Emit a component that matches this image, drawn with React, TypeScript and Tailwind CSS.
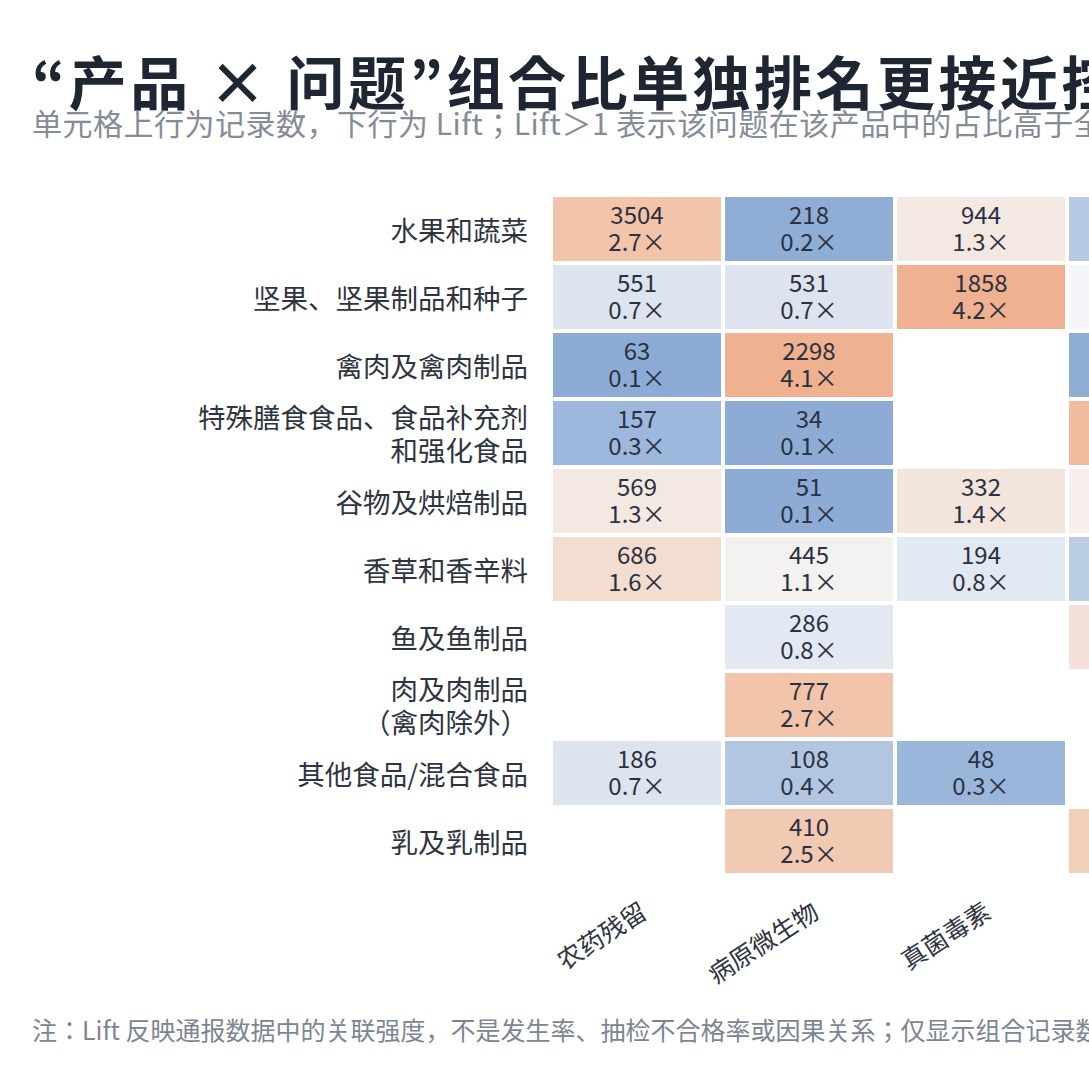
import React from "react";

type Cell = { n: number; lift: number; bg: string } | null;

interface Row {
  label: string[];
  cells: Cell[];
}

const columns = ["农药残留", "病原微生物", "真菌毒素", "重金属"];

const rows: Row[] = [
  {
    label: ["水果和蔬菜"],
    cells: [
      { n: 3504, lift: 2.7, bg: "bg-[#f2c4a9]" },
      { n: 218, lift: 0.2, bg: "bg-[#8fadd5]" },
      { n: 944, lift: 1.3, bg: "bg-[#f4e8e3]" },
      { n: 402, lift: 0.4, bg: "bg-[#b6c8e2]" },
    ],
  },
  {
    label: ["坚果、坚果制品和种子"],
    cells: [
      { n: 551, lift: 0.7, bg: "bg-[#dde4f0]" },
      { n: 531, lift: 0.7, bg: "bg-[#dde4f0]" },
      { n: 1858, lift: 4.2, bg: "bg-[#efb18f]" },
      { n: 356, lift: 0.9, bg: "bg-[#f3f5f9]" },
    ],
  },
  {
    label: ["禽肉及禽肉制品"],
    cells: [
      { n: 63, lift: 0.1, bg: "bg-[#8dabd4]" },
      { n: 2298, lift: 4.1, bg: "bg-[#efb18f]" },
      null,
      { n: 41, lift: 0.1, bg: "bg-[#8fadd5]" },
    ],
  },
  {
    label: ["特殊膳食食品、食品补充剂", "和强化食品"],
    cells: [
      { n: 157, lift: 0.3, bg: "bg-[#9db8dc]" },
      { n: 34, lift: 0.1, bg: "bg-[#8dabd4]" },
      null,
      { n: 512, lift: 3.1, bg: "bg-[#efbc9f]" },
    ],
  },
  {
    label: ["谷物及烘焙制品"],
    cells: [
      { n: 569, lift: 1.3, bg: "bg-[#f4e8e3]" },
      { n: 51, lift: 0.1, bg: "bg-[#8dabd4]" },
      { n: 332, lift: 1.4, bg: "bg-[#f3e4dc]" },
      { n: 238, lift: 1.2, bg: "bg-[#f6efed]" },
    ],
  },
  {
    label: ["香草和香辛料"],
    cells: [
      { n: 686, lift: 1.6, bg: "bg-[#f3ddd0]" },
      { n: 445, lift: 1.1, bg: "bg-[#f3f2f0]" },
      { n: 194, lift: 0.8, bg: "bg-[#e2e9f3]" },
      { n: 131, lift: 0.5, bg: "bg-[#bccde6]" },
    ],
  },
  {
    label: ["鱼及鱼制品"],
    cells: [
      null,
      { n: 286, lift: 0.8, bg: "bg-[#e2e9f3]" },
      null,
      { n: 167, lift: 1.5, bg: "bg-[#f4e2da]" },
    ],
  },
  {
    label: ["肉及肉制品", "（禽肉除外）"],
    cells: [null, { n: 777, lift: 2.7, bg: "bg-[#f2c4a9]" }, null, null],
  },
  {
    label: ["其他食品/混合食品"],
    cells: [
      { n: 186, lift: 0.7, bg: "bg-[#dde4f0]" },
      { n: 108, lift: 0.4, bg: "bg-[#b2c6e2]" },
      { n: 48, lift: 0.3, bg: "bg-[#9bb6db]" },
      null,
    ],
  },
  {
    label: ["乳及乳制品"],
    cells: [
      null,
      { n: 410, lift: 2.5, bg: "bg-[#f2cab4]" },
      null,
      { n: 92, lift: 2.3, bg: "bg-[#f2cfbb]" },
    ],
  },
];

const jp = { fontFamily: '"Noto Sans CJK JP", "Noto Sans CJK SC", sans-serif' };

function HeatCell({ cell }: { cell: Cell }) {
  if (!cell) return <div className="w-[168px] h-[64px] shrink-0" />;
  return (
    <div
      className={`w-[168px] h-[64px] shrink-0 flex flex-col items-center justify-center pb-[5px] text-[24px] leading-[27px] text-[#2b3140] ${cell.bg}`}
    >
      <span>{cell.n}</span>
      <span>{cell.lift.toFixed(1)}×</span>
    </div>
  );
}

export default function App() {
  return (
    <div
      className="w-[1089px] h-[1089px] overflow-hidden bg-white"
      style={{ fontFamily: '"Noto Sans CJK SC", "Noto Sans", sans-serif' }}
    >
      <div className="w-[1600px] pl-[32px] pt-[51px]">
        <h1
          className="text-[58px] leading-[58px] font-bold tracking-[3.5px] text-[#1e2633] whitespace-nowrap"
          style={jp}
        >
          “产品 × 问题”组合比单独排名更接近控制重点
        </h1>
        <p
          className="-mt-[2px] text-[30px] leading-[30px] tracking-[0.5px] text-[#858c98] whitespace-nowrap"
          style={jp}
        >
          单元格上行为记录数，下行为 Lift；Lift＞1 表示该问题在该产品中的占比高于全部产品的平均水平
        </p>

        <div className="mt-[60px] flex flex-col gap-[4px]">
          {rows.map((r, i) => (
            <div key={i} className="flex items-center h-[64px]">
              <div className="w-[496px] shrink-0 text-right text-[27.5px] leading-[33px] text-[#2e3440] whitespace-nowrap">
                {r.label.map((l, j) => (
                  <div key={j}>{l}</div>
                ))}
              </div>
              <div className="ml-[25px] flex gap-[4px]">
                {r.cells.map((c, j) => (
                  <HeatCell key={j} cell={c} />
                ))}
              </div>
            </div>
          ))}
        </div>

        <div className="ml-[521px] flex gap-[4px] h-[100px] pt-[22px]">
          {columns.map((c) => (
            <div key={c} className="w-[168px] shrink-0 flex justify-end pr-[78px]">
              <span className="inline-block h-[25px] whitespace-nowrap text-[25px] leading-[25px] text-[#2e3440] origin-right -rotate-[33deg]">
                {c}
              </span>
            </div>
          ))}
        </div>

        <p
          className="mt-[42px] text-[25px] leading-[28px] text-[#7d8593] whitespace-nowrap"
          style={jp}
        >
          注：Lift 反映通报数据中的关联强度，不是发生率、抽检不合格率或因果关系；仅显示组合记录数 ≥ 30 的单元格。
        </p>
      </div>
    </div>
  );
}
